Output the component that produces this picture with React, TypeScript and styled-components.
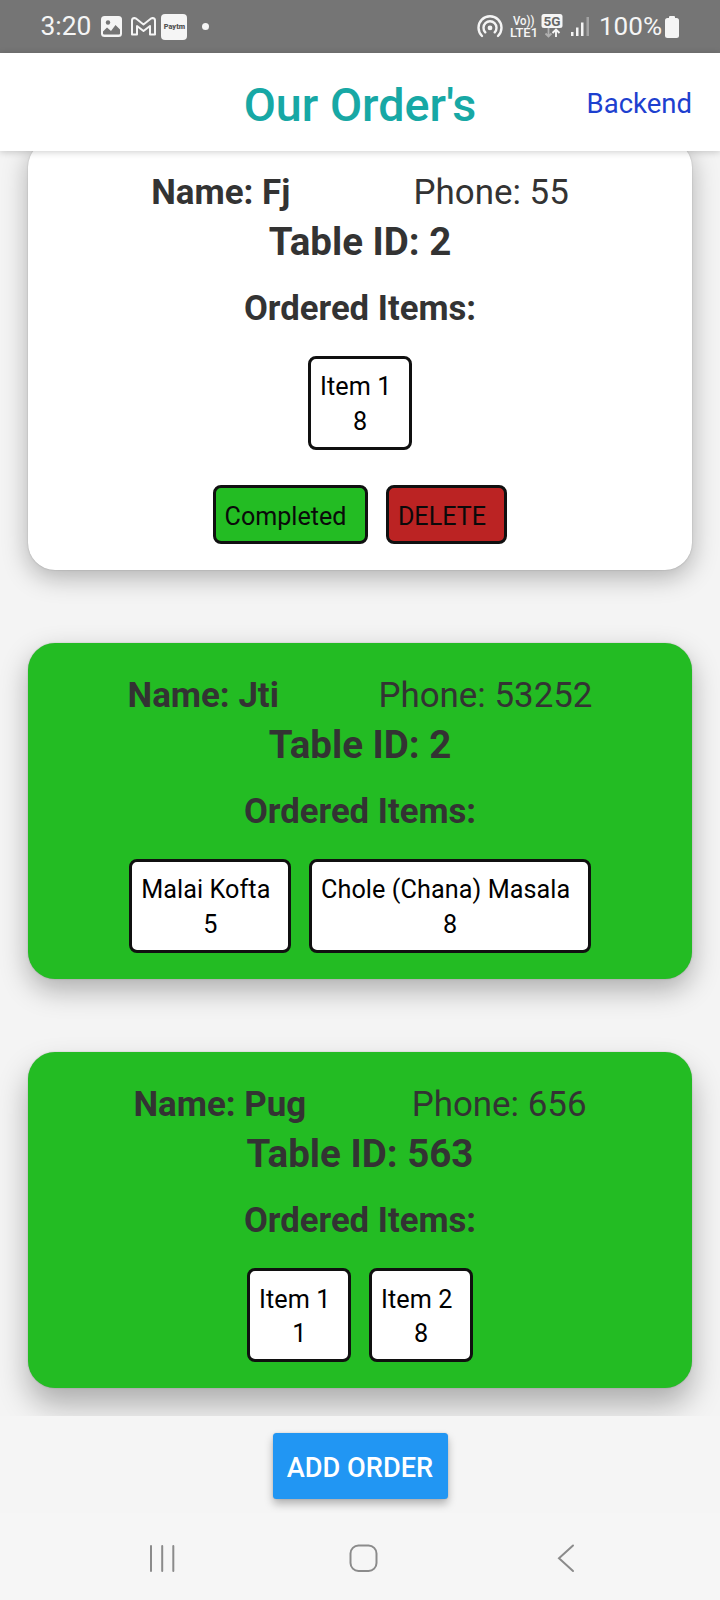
import React from "react";
import styled, { createGlobalStyle } from "styled-components";

const GlobalStyle = createGlobalStyle`
  * { box-sizing: border-box; }
  body { margin: 0; background: #f5f5f5; font-family: Roboto, sans-serif; }
`;

const Screen = styled.div`
  display: flex;
  flex-direction: column;
  width: 720px;
  height: 1600px;
  background: #f4f4f4;
  overflow: hidden;
`;

const StatusBar = styled.div`
  display: flex;
  align-items: center;
  justify-content: space-between;
  flex: none;
  height: 53px;
  padding: 0 41px 0 40.5px;
  background: #757575;
  color: #f5f5f5;
`;

const StatusGroup = styled.div`
  display: flex;
  align-items: center;
  height: 53px;
`;

const StatusText = styled.span<{ $size: number; $left?: number }>`
  margin-left: ${(p) => p.$left ?? 0}px;
  font-size: ${(p) => p.$size}px;
  line-height: 52.5px;
  height: 53px;
`;

const StatusIcon = styled.svg<{ $left: number }>`
  flex: none;
  margin-left: ${(p) => p.$left}px;
`;

const AppBadge = styled.span`
  display: flex;
  align-items: center;
  justify-content: center;
  width: 26px;
  height: 26px;
  margin-left: 5px;
  border-radius: 4px;
  background: #f5f5f5;
  color: #555;
  font-size: 7.4px;
  font-weight: 900;
  line-height: 26px;
`;

const Dot = styled.span`
  width: 7px;
  height: 7px;
  margin-left: 15px;
  border-radius: 50%;
  background: #f5f5f5;
`;

const Header = styled.header`
  position: relative;
  z-index: 1;
  display: grid;
  grid-template-columns: 1fr auto 1fr;
  align-items: center;
  flex: none;
  height: 98px;
  padding: 0 28px;
  background: #fff;
  box-shadow: 0 1px 7px rgba(0, 0, 0, 0.2);
`;

const Title = styled.h1`
  grid-column: 2;
  margin: 0;
  padding-top: 5px;
  color: #17a8a5;
  font-size: 46.7px;
  font-weight: 500;
  line-height: 60px;
`;

const BackendLink = styled.a`
  justify-self: end;
  padding-top: 3px;
  color: #1d40cf;
  font-size: 27.5px;
  line-height: 40px;
`;

const OrderList = styled.main`
  display: flex;
  flex-direction: column;
  gap: 72.6px;
  flex: none;
  height: 1265px;
  padding: 0 28px;
  overflow: hidden;
`;

const Card = styled.section<{ $done: boolean; $depth: number }>`
  flex: none;
  padding: 27.7px 0 26.6px;
  border-radius: 27px;
  background: ${(p) => (p.$done ? "#23bc23" : "#fff")};
  box-shadow: 0 0 1.5px rgba(0, 0, 0, 0.25),
    0 ${(p) => p.$depth}px ${(p) => 22 + p.$depth * 0.5}px rgba(0, 0, 0, 0.29);
  color: #333;
  text-align: center;

  &:first-child { margin-top: -11.2px; }
`;

const Customer = styled.div`
  display: flex;
  justify-content: space-evenly;
  height: 49px;
  font-size: 34.9px;
  line-height: 49px;
`;

const TableId = styled.h2`
  margin: 0;
  font-size: 38.5px;
  font-weight: 700;
  line-height: 50.4px;
`;

const ItemsHeading = styled.h3`
  margin: 16.6px 0 0;
  font-size: 34.7px;
  font-weight: 700;
  line-height: 48px;
`;

const ChipRow = styled.div<{ $top: number }>`
  display: flex;
  justify-content: center;
  gap: 18px;
  margin-top: ${(p) => p.$top}px;
`;

const Item = styled.div`
  height: 93.7px;
  padding: 11.4px 8.5px 0 9px;
  border: 3px solid #101010;
  border-radius: 8px;
  background: #fff;
  color: #000;
  font-size: 25.2px;
  line-height: 34.5px;
  letter-spacing: 0.08px;
`;

const ItemName = styled.div`
  margin-right: 9px;
`;

const ActionButton = styled.button<{ $color: string }>`
  height: 58.4px;
  padding: 11.2px 18.5px 7px 9px;
  border: 3px solid #101010;
  border-radius: 8px;
  background: ${(p) => p.$color};
  color: #0a0a0a;
  font: 25.1px/34px Roboto, sans-serif;
`;

const Footer = styled.footer`
  display: flex;
  justify-content: center;
  align-items: flex-start;
  flex: none;
  height: 97px;
  padding-top: 17px;
  background: #f5f5f5;
`;

const AddButton = styled.button`
  width: 175px;
  height: 66px;
  padding: 3px 0 0;
  border: 0;
  border-radius: 3.5px;
  background: #2196f3;
  box-shadow: 0 5px 8px rgba(0, 0, 0, 0.27), 0 0 2px rgba(0, 0, 0, 0.15);
  color: #fff;
  font: 500 27.2px/40px Roboto, sans-serif;
`;

const NavBar = styled.nav`
  display: flex;
  flex: none;
  height: 87px;
  padding: 30px 0 0 148.5px;
  background: #f6f6f6;
`;

const NavIcon = styled.svg<{ $left?: number }>`
  flex: none;
  margin-left: ${(p) => p.$left ?? 0}px;
`;

type Order = {
  name: string;
  phone: string;
  table: string;
  done: boolean;
  depth: number;
  items: [string, number][];
};

const orders: Order[] = [
  { name: "Fj", phone: "55", table: "2", done: false, depth: 7, items: [["Item 1", 8]] },
  {
    name: "Jti",
    phone: "53252",
    table: "2",
    done: true,
    depth: 11,
    items: [["Malai Kofta", 5], ["Chole (Chana) Masala", 8]],
  },
  { name: "Pug", phone: "656", table: "563", done: true, depth: 17, items: [["Item 1", 1], ["Item 2", 8]] },
];

function OrderCard({ order }: { order: Order }) {
  return (
    <Card $done={order.done} $depth={order.depth}>
      <Customer>
        <b>Name: {order.name}</b>
        <span>Phone: {order.phone}</span>
      </Customer>
      <TableId>Table ID: {order.table}</TableId>
      <ItemsHeading>Ordered Items:</ItemsHeading>
      <ChipRow $top={24.5}>
        {order.items.map(([label, count]) => (
          <Item key={label}>
            <ItemName>{label}</ItemName>
            {count}
          </Item>
        ))}
      </ChipRow>
      {!order.done && (
        <ChipRow $top={35.6}>
          <ActionButton $color="#23bc23">Completed</ActionButton>
          <ActionButton $color="#bb2323">DELETE</ActionButton>
        </ChipRow>
      )}
    </Card>
  );
}

export default function App() {
  return (
    <Screen>
      <GlobalStyle />
      <StatusBar>
        <StatusGroup>
          <StatusText $size={26.4}>3:20</StatusText>
          <StatusIcon $left={10} width="21" height="21" viewBox="0 0 21 21">
            <rect width="21" height="21" rx="3.5" fill="#f5f5f5" />
            <circle cx="7" cy="6.5" r="2.2" fill="#757575" />
            <path d="M2 17.5V15.5L6 11.500 10 15 14.500 9 19 13.500V17.500q0 1-1 1H3q-1 0-1-1z" fill="#757575" />
          </StatusIcon>
          <StatusIcon $left={9} width="25" height="19" viewBox="0 0 25 19" fill="none" stroke="#f5f5f5" strokeWidth="2" strokeLinejoin="round">
            <path d="M1 3.500Q1 1 3.300 1L5 1.500 12.500 7.500 20 1.500 21.700 1Q24 1 24 3.500V17.500H19V9L12.500 14 6 9V17.500H1z" />
          </StatusIcon>
          <AppBadge>Paytm</AppBadge>
          <Dot />
        </StatusGroup>
        <StatusGroup>
          <StatusIcon $left={0} width="26" height="23" viewBox="0 0 26 23" fill="none" stroke="#f5f5f5" strokeWidth="2.400" strokeLinecap="round">
            <path d="M5 21A11.500 11.500 0 1 1 21 21" />
            <path d="M8.300 17.300A6.500 6.500 0 1 1 17.700 17.300" />
            <circle cx="13" cy="12.900" r="2.400" fill="#f5f5f5" stroke="none" />
          </StatusIcon>
          <StatusIcon $left={7} width="28" height="26" viewBox="0 0 28 26" fill="#f5f5f5" fontFamily="Roboto" fontWeight="500">
            <text x="3" y="11" fontSize="12.500" textLength="21.500" lengthAdjust="spacingAndGlyphs">Vo))</text>
            <text x="0" y="23" fontSize="13">LTE1</text>
          </StatusIcon>
          <StatusIcon $left={3} width="22" height="26" viewBox="0 0 22 26">
            <rect x="0.500" y="0" width="21" height="14" rx="2.500" fill="#f5f5f5" />
            <text x="11" y="12" fontSize="13.500" fontWeight="700" fontFamily="Roboto" fill="#666" textAnchor="middle">5G</text>
            <path d="M7.500 14v8M4.500 19.500l3 3 3-3" stroke="#b0b0b0" strokeWidth="1.800" fill="none" />
            <path d="M15 23v-7M11.500 19l3.500-3.500 3.500 3.500" stroke="#f5f5f5" strokeWidth="1.900" fill="none" />
          </StatusIcon>
          <StatusIcon $left={7} width="20" height="20" viewBox="0 0 20 20" fill="#f5f5f5">
            <rect x="1" y="15" width="2.500" height="4" />
            <rect x="6" y="10.500" width="2.500" height="8.500" />
            <rect x="11" y="5.500" width="2.500" height="13.500" />
            <rect x="16.500" y="0" width="2.500" height="19" fill="#a3a3a3" />
          </StatusIcon>
          <StatusText $size={26.1} $left={9}>100%</StatusText>
          <StatusIcon $left={3} width="14" height="22" viewBox="0 0 14 22" fill="#f5f5f5">
            <rect x="4" y="0" width="6" height="4" rx="1" />
            <rect x="0" y="2" width="14" height="20" rx="2.500" />
          </StatusIcon>
        </StatusGroup>
      </StatusBar>
      <Header>
        <Title>Our Order's</Title>
        <BackendLink>Backend</BackendLink>
      </Header>
      <OrderList>
        {orders.map((order) => (
          <OrderCard key={order.name} order={order} />
        ))}
      </OrderList>
      <Footer>
        <AddButton>ADD ORDER</AddButton>
      </Footer>
      <NavBar>
        <NavIcon width="28" height="30" viewBox="0 0 28 30" stroke="#8b8b8b" strokeWidth="2" strokeLinecap="round">
          <path d="M2 3V28M13.200 3V28M24.300 3V28" />
        </NavIcon>
        <NavIcon $left={171} width="30" height="30" viewBox="0 0 30 30" fill="none" stroke="#8b8b8b" strokeWidth="2">
          <rect x="2.500" y="2.500" width="26" height="25.500" rx="8" />
        </NavIcon>
        <NavIcon $left={178} width="20" height="30" viewBox="0 0 20 30" fill="none" stroke="#8b8b8b" strokeWidth="2" strokeLinecap="round">
          <path d="M17 2.500L3 15.300L17 28" />
        </NavIcon>
      </NavBar>
    </Screen>
  );
}
